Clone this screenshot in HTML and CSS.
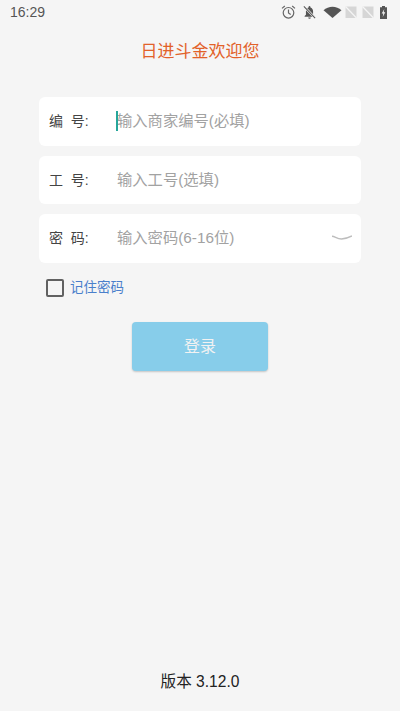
FILE: index.html
```html
<!DOCTYPE html>
<html>
    <head>
        <meta name="viewport" content="width=device-width, initial-scale=1">
        <meta charset="utf-8">
        <title>日进斗金</title>
        <link rel="stylesheet" href="styles.css">
    </head>
    <body>
        <div class="statusbar">
            <span class="time">16:29</span>
            <div class="status-icons">
                <!-- alarm -->
                <svg width="15" height="16" viewBox="0 0 15 16" fill="none" stroke="#666" stroke-width="1.200">
                    <circle cx="7.500" cy="8.800" r="5.300"/>
                    <path d="M7.500 5.500V9l2.200 1.600"/>
                    <path d="M1 4.400 3.800 2M14 4.400 11.200 2"/>
                </svg>
                <!-- muted bell -->
                <svg class="bell" width="15" height="16" viewBox="0 0 16 16" fill="#555">
                    <path d="M8 1.600c-.6 0-1 .4-1 1v.6C5.200 3.700 4.200 5.300 4.200 7.200V10.800L2.800 12.200V13H13.200V12.200L11.800 10.800V7.200C11.800 5.300 10.800 3.700 9 3.200V2.600c0-.6-.4-1-1-1z"/>
                    <path d="M6.600 13.800a1.400 1.400 0 0 0 2.800 0z"/>
                    <path d="M2 2 14 14.500" stroke="#f5f5f5" stroke-width="2.400"/>
                    <path d="M2 2 14 14.500" stroke="#555" stroke-width="1.100"/>
                </svg>
                <!-- wifi -->
                <svg class="wifi" width="19" height="16" viewBox="0 0 19 16" fill="#555">
                    <path d="M0.500 6.200C3 4 6.200 2.800 9.500 2.800s6.500 1.200 9 3.400L9.500 14z"/>
                </svg>
                <!-- no sim x2 -->
                <svg class="sim" width="12" height="16" viewBox="0 0 12 16">
                    <path d="M0.500 2.500H11.500V14H0.500z" fill="#d6d6d6"/>
                    <path d="M0.500 2.500 11.500 14" stroke="#f5f5f5" stroke-width="1.200"/>
                </svg>
                <svg class="sim" width="12" height="16" viewBox="0 0 12 16">
                    <path d="M0.500 2.500H11.500V14H0.500z" fill="#d6d6d6"/>
                    <path d="M0.500 2.500 11.500 14" stroke="#f5f5f5" stroke-width="1.200"/>
                </svg>
                <!-- battery charging -->
                <svg class="battery" width="7" height="16" viewBox="0 0 7 16">
                    <path d="M2 2H5V3.200H7V15H0V3.200H2z" fill="#555"/>
                    <path d="M4.300 5 1.700 9.500H3.300L2.700 13 5.300 8.300H3.700z" fill="#f5f5f5"/>
                </svg>
            </div>
        </div>

        <div class="title">日进斗金欢迎您</div>

        <div class="form">
            <div class="row">
                <span class="label">编&nbsp;&nbsp;号:</span>
                <span class="cursor"></span>
                <span class="hint">输入商家编号(必填)</span>
            </div>
            <div class="row">
                <span class="label">工&nbsp;&nbsp;号:</span>
                <span class="hint">输入工号(选填)</span>
            </div>
            <div class="row">
                <span class="label">密&nbsp;&nbsp;码:</span>
                <span class="hint">输入密码(6-16位)</span>
                <!-- closed eye -->
                <svg class="eye" width="20" height="6" viewBox="0 0 20 6" fill="none" stroke="#bdbdbd" stroke-width="1.400">
                    <path d="M0 1.200C3 1.400 5 4 9.500 4S16 3 20 1"/>
                </svg>
            </div>
        </div>

        <div class="remember">
            <span class="checkbox"></span>
            <span class="remember-text">记住密码</span>
        </div>

        <div class="login-wrap">
            <button class="login" type="button">登录</button>
        </div>

        <div class="version">版本 3.12.0</div>
    </body>
</html>
```

FILE: styles.css
```css
html, body {
    height: 100%;
}
body {
    margin: 0;
    background-color: #F5F5F5;
    font-family: "Liberation Sans", "Noto Sans CJK SC", sans-serif;
    display: flex;
    flex-direction: column;
    box-sizing: border-box;
    overflow: hidden;
}
/* Status bar */
.statusbar {
    height: 25px;
    padding: 0 13px 0 10px;
    display: flex;
    align-items: center;
    justify-content: space-between;
}
.time {
    font-size: 14px;
    color: #555555;
    margin-top: -1px;
}
.status-icons {
    display: flex;
    align-items: center;
    margin-top: -1px;
}
.bell {
    margin-left: 6px;
}
.wifi {
    margin-left: 6px;
}
.sim {
    margin-left: 3px;
}
.sim + .sim {
    margin-left: 5px;
}
.battery {
    margin-left: 6px;
}
.title {
    margin-top: 17px;
    text-align: center;
    font-size: 17px;
    line-height: 20px;
    color: #E2622A;
}
/* Form */
.form {
    margin: 35px 39px 0 39px;
    display: flex;
    flex-direction: column;
    gap: 10px;
}
.row {
    height: 48.500px;
    box-sizing: border-box;
    background-color: #FFFFFF;
    border-radius: 6px;
    display: flex;
    align-items: center;
    padding: 0 9px 0 10px;
    position: relative;
}
.label {
    width: 68px;
    font-size: 14px;
    line-height: 20px;
    color: #444444;
}
.hint {
    font-size: 15.300px;
    line-height: 20px;
    color: #A2A2A2;
}
.cursor {
    position: absolute;
    left: 77px;
    top: 14px;
    width: 2px;
    height: 20px;
    background-color: #26A69A;
}
.eye {
    margin-left: auto;
}
/* Remember */
.remember {
    margin: 15px 0 0 46px;
    display: flex;
    align-items: center;
    gap: 6px;
    height: 20px;
}
.checkbox {
    width: 14px;
    height: 14px;
    border: 2px solid #616161;
    border-radius: 2px;
}
.remember-text {
    font-size: 13.500px;
    line-height: 20px;
    color: #4A7FCB;
}
/* Login */
.login-wrap {
    margin-top: 24px;
    display: flex;
    justify-content: center;
}
.login {
    width: 136px;
    height: 49px;
    background-color: #87CDEA;
    border: none;
    border-radius: 4px;
    box-shadow: 0 1px 2px rgba(0, 0, 0, 0.2);
    color: #F2F2F2;
    font-family: inherit;
    font-size: 16px;
    padding: 0 0 3px 0;
}
.version {
    margin-top: auto;
    margin-bottom: 19px;
    text-align: center;
    font-size: 15.600px;
    line-height: 20px;
    color: #222222;
}
```
